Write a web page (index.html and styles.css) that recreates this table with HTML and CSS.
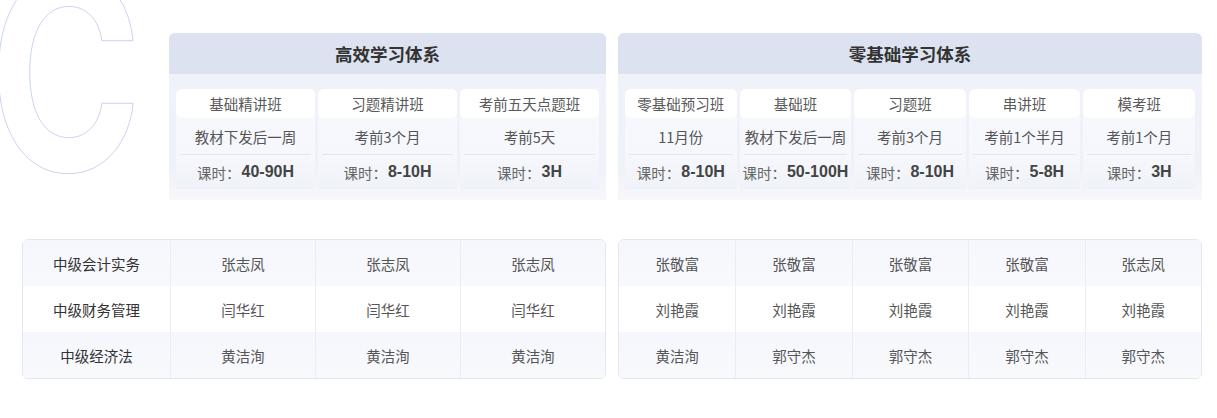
FILE: index.html
```html
<!DOCTYPE html>
<html lang="zh-CN">
<head>
<meta charset="utf-8">
<link rel="stylesheet" href="styles.css">
</head>
<body>
<div class="page">
  <div class="deco">C</div>
  <div class="grid top">
    <section class="panel panel-left">
      <div class="panel-head">高效学习体系</div>
      <div class="panel-body">
        <div class="col"><div class="col-name">基础精讲班</div><div class="col-row">教材下发后一周</div><div class="col-row">课时：<b>40-90H</b></div></div>
        <div class="col"><div class="col-name">习题精讲班</div><div class="col-row">考前3个月</div><div class="col-row">课时：<b>8-10H</b></div></div>
        <div class="col"><div class="col-name">考前五天点题班</div><div class="col-row">考前5天</div><div class="col-row">课时：<b>3H</b></div></div>
      </div>
    </section>
    <section class="panel">
      <div class="panel-head">零基础学习体系</div>
      <div class="panel-body">
        <div class="col"><div class="col-name">零基础预习班</div><div class="col-row">11月份</div><div class="col-row">课时：<b>8-10H</b></div></div>
        <div class="col"><div class="col-name">基础班</div><div class="col-row">教材下发后一周</div><div class="col-row">课时：<b>50-100H</b></div></div>
        <div class="col"><div class="col-name">习题班</div><div class="col-row">考前3个月</div><div class="col-row">课时：<b>8-10H</b></div></div>
        <div class="col"><div class="col-name">串讲班</div><div class="col-row">考前1个半月</div><div class="col-row">课时：<b>5-8H</b></div></div>
        <div class="col"><div class="col-name">模考班</div><div class="col-row">考前1个月</div><div class="col-row">课时：<b>3H</b></div></div>
      </div>
    </section>
  </div>
  <div class="grid bottom">
    <div class="table t4">
      <div class="row"><span class="label">中级会计实务</span><span>张志凤</span><span>张志凤</span><span>张志凤</span></div>
      <div class="row"><span class="label">中级财务管理</span><span>闫华红</span><span>闫华红</span><span>闫华红</span></div>
      <div class="row"><span class="label">中级经济法</span><span>黄洁洵</span><span>黄洁洵</span><span>黄洁洵</span></div>
    </div>
    <div class="table t5">
      <div class="row"><span>张敬富</span><span>张敬富</span><span>张敬富</span><span>张敬富</span><span>张志凤</span></div>
      <div class="row"><span>刘艳霞</span><span>刘艳霞</span><span>刘艳霞</span><span>刘艳霞</span><span>刘艳霞</span></div>
      <div class="row"><span>黄洁洵</span><span>郭守杰</span><span>郭守杰</span><span>郭守杰</span><span>郭守杰</span></div>
    </div>
  </div>
</div>
</body>
</html>
```

FILE: styles.css
```css
* { box-sizing: border-box; }
html, body { margin: 0; background: #fff; }
body {
  font-family: "Noto Sans CJK SC", "Noto Sans", sans-serif;
  color: #555;
  width: 1217px;
  height: 418px;
  overflow: hidden;
}
.page {
  position: relative;
  padding: 33px 15px 0 22px;
}
.deco {
  position: absolute;
  left: -11px;
  top: -64px;
  font-family: Inter, "Noto Sans", sans-serif;
  font-weight: 700;
  font-size: 272px;
  line-height: 1;
  color: transparent;
  -webkit-text-stroke: 1px #c3cdee;
  transform: scaleX(0.76);
  transform-origin: left top;
  z-index: 0;
  pointer-events: none;
}
.grid {
  position: relative;
  z-index: 1;
  display: grid;
  grid-template-columns: 584px 584px;
  column-gap: 12px;
}
.panel-left { margin-left: 147px; }
.panel {
  border-radius: 6px 6px 0 0;
  overflow: hidden;
  background: linear-gradient(#f0f3f9, #eef1f8 80%, #f7f8fc);
}
.panel-head {
  height: 41px;
  background: #dce2ef;
  display: flex;
  align-items: center;
  justify-content: center;
  font-size: 17.5px;
  font-weight: 700;
  color: #333;
}
.panel-body {
  display: flex;
  gap: 3px;
  padding: 15px 7px 11px;
}
.col {
  flex: 1 1 0;
  min-width: 0;
  display: flex;
  flex-direction: column;
  background: linear-gradient(#f7f9fd, #f5f7fc 70%, #eff2f8);
  border-radius: 6px 6px 0 0;
}
.col-name {
  height: 29px;
  background: #fff;
  border-radius: 6px;
  display: flex;
  align-items: center;
  justify-content: center;
  font-size: 14.5px;
  color: #5a5a5a;
  white-space: nowrap;
}
.col-row {
  height: 36px;
  display: flex;
  align-items: center;
  justify-content: center;
  font-size: 14.5px;
  color: #555;
  white-space: nowrap;
  margin: 0 4px;
}
.col-row + .col-row {
  border-top: 1px solid #e1e5ee;
  height: 35px;
  color: #666;
}
.col-row b {
  font-family: "Liberation Sans", Arial, sans-serif;
  font-weight: 700;
  font-size: 16px;
  color: #444;
  margin-left: 1px;
}
.bottom { margin-top: 39px; }
.table {
  border: 1px solid #e2e7f1;
  border-radius: 6px;
  overflow: hidden;
}
.row {
  display: grid;
  height: 46px;
}
.t4 .row { grid-template-columns: 147px 1fr 1fr 1fr; }
.t5 .row { grid-template-columns: repeat(5, 1fr); }
.row:nth-child(odd) { background: linear-gradient(#f5f7fc, #f8f9fd); }
.row:nth-child(even) { background: #fff; }
.row > span {
  display: flex;
  align-items: center;
  justify-content: center;
  font-size: 14.5px;
  color: #555;
  border-left: 1px solid #e9edf5;
}
.row > span:first-child { border-left: none; }
.row > span.label { color: #333; }
```
